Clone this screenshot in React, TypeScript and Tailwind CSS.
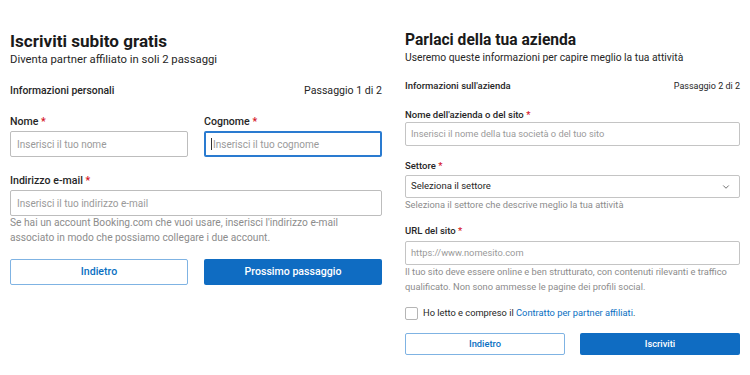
import { ChevronDown } from 'lucide-react'

const FONT = { fontFamily: 'Roboto, "Noto Sans", sans-serif' }

function Req() {
  return <span className="text-[#d4111e]"> *</span>
}

function LeftForm() {
  return (
    <div className="w-[372px] pt-[30px]">
      <h1 className="text-[17.1px] leading-[22px] font-bold text-[#1a1a1a]">Iscriviti subito gratis</h1>
      <p className="text-[11.3px] leading-[16px] text-[#262626]">Diventa partner affiliato in soli 2 passaggi</p>

      <div className="mt-[15px] flex justify-between text-[10.4px] leading-[16px] text-[#262626]">
        <span className="font-medium">Informazioni personali</span>
        <span className="text-[10.6px]">Passaggio 1 di 2</span>
      </div>

      <div className="mt-[15px] grid grid-cols-2 gap-4">
        <div>
          <label className="block text-[10.6px] leading-[16px] font-medium text-[#262626]">Nome<Req /></label>
          <div className="mt-[1px] h-[26px] border border-[#bdbdbd] rounded-[2px] px-[6px] flex items-center text-[10px] text-[#9a9a9a]">
            Inserisci il tuo nome
          </div>
        </div>
        <div>
          <label className="block text-[10.6px] leading-[16px] font-medium text-[#262626]">Cognome<Req /></label>
          <div className="mt-[1px] h-[26px] border-2 border-[#2a7bd0] rounded-[2px] px-[5px] flex items-center text-[10px] text-[#9a9a9a]">
            <span className="w-px h-[12px] bg-[#333] mr-[1px]" />
            Inserisci il tuo cognome
          </div>
        </div>
      </div>

      <label className="mt-[16px] block text-[10.6px] leading-[16px] font-medium text-[#262626]">Indirizzo e-mail<Req /></label>
      <div className="mt-[1px] h-[26px] border border-[#bdbdbd] rounded-[2px] px-[6px] flex items-center text-[10px] text-[#9a9a9a]">
        Inserisci il tuo indirizzo e-mail
      </div>
      <p className="mt-[-1px] text-[10.2px] leading-[15px] text-[#8c8c8c]">
        Se hai un account Booking.com che vuoi usare, inserisci l'indirizzo e-mail
        <br />
        associato in modo che possiamo collegare i due account.
      </p>

      <div className="mt-[14px] grid grid-cols-2 gap-4">
        <button className="h-[26px] border border-[#7fb3e3] rounded-[2px] text-[10.6px] font-medium text-[#0a6fc2]">Indietro</button>
        <button className="h-[26px] bg-[#0f6cc2] rounded-[2px] text-[10.6px] font-medium text-white">Prossimo passaggio</button>
      </div>
    </div>
  )
}

function RightForm() {
  return (
    <div className="w-[335px] pt-[29px]">
      <h1 className="text-[15.6px] leading-[22px] font-bold text-[#1a1a1a]">Parlaci della tua azienda</h1>
      <p className="mt-[-1px] text-[10.3px] leading-[16px] text-[#262626]">Useremo queste informazioni per capire meglio la tua attività</p>

      <div className="mt-[13px] flex justify-between text-[9.5px] leading-[14px] text-[#262626]">
        <span className="font-medium">Informazioni sull'azienda</span>
        <span className="text-[9px]">Passaggio 2 di 2</span>
      </div>

      <label className="mt-[15px] block text-[9.5px] leading-[14px] font-medium text-[#262626]">Nome dell'azienda o del sito<Req /></label>
      <div className="h-[24px] border border-[#c4c4c4] rounded-[2px] px-[5px] flex items-center text-[9.3px] text-[#9a9a9a]">
        Inserisci il nome della tua società o del tuo sito
      </div>

      <label className="mt-[13px] block text-[9.5px] leading-[14px] font-medium text-[#262626]">Settore<Req /></label>
      <div className="mt-[2px] h-[23px] border border-[#c4c4c4] rounded-[2px] pl-[5px] pr-[8px] flex items-center justify-between text-[9.5px] text-[#262626]">
        <span>Seleziona il settore</span>
        <ChevronDown size={10} strokeWidth={2} className="text-[#555]" />
      </div>
      <p className="text-[9.3px] leading-[13px] text-[#8c8c8c]">Seleziona il settore che descrive meglio la tua attività</p>

      <label className="mt-[13px] block text-[9.5px] leading-[14px] font-medium text-[#262626]">URL del sito<Req /></label>
      <div className="mt-[3px] h-[24px] border border-[#c4c4c4] rounded-[2px] px-[5px] flex items-center text-[9.3px] text-[#9a9a9a]">
        https://www.nomesito.com
      </div>
      <p className="mt-[-1px] text-[9.3px] leading-[15px] text-[#8c8c8c]">
        Il tuo sito deve essere online e ben strutturato, con contenuti rilevanti e traffico
        <br />
        qualificato. Non sono ammesse le pagine dei profili social.
      </p>

      <div className="mt-[12px] flex items-center gap-[5px]">
        <span className="w-[13px] h-[13px] border border-[#b5b5b5] rounded-[2px]" />
        <span className="text-[9.3px] leading-[14px] text-[#262626]">
          Ho letto e compreso il <span className="text-[#0a6fc2]">Contratto per partner affiliati</span>.
        </span>
      </div>

      <div className="mt-[13px] grid grid-cols-2 gap-[15px]">
        <button className="h-[22px] border border-[#7fb3e3] rounded-[2px] text-[9.3px] font-medium text-[#0a6fc2]">Indietro</button>
        <button className="h-[22px] bg-[#0f6cc2] rounded-[2px] text-[9.3px] font-medium text-white">Iscriviti</button>
      </div>
    </div>
  )
}

export default function App() {
  return (
    <div style={FONT} className="w-[750px] h-[375px] bg-white flex pl-[10px] gap-[23px] overflow-hidden">
      <LeftForm />
      <RightForm />
    </div>
  )
}
